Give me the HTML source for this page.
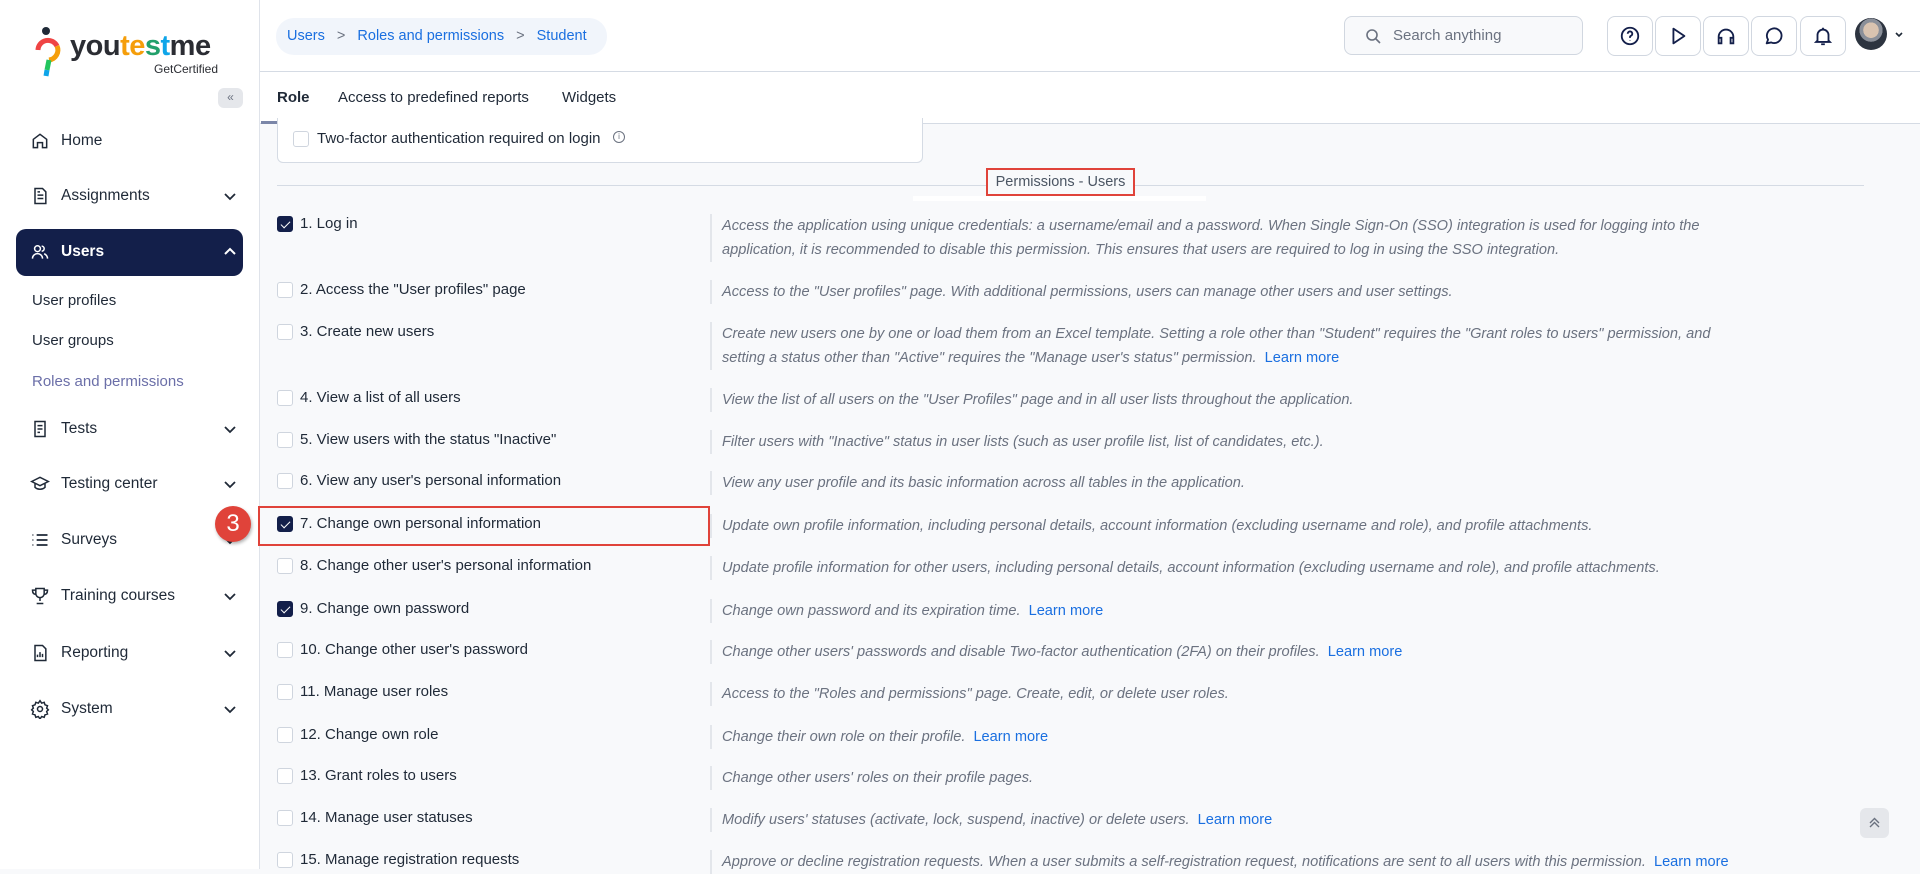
<!DOCTYPE html>
<html><head><meta charset="utf-8"><style>
*{margin:0;padding:0;box-sizing:border-box}
body{width:1920px;height:869px;overflow:hidden;font-family:"Liberation Sans",sans-serif;background:#f8f9fb;position:relative;color:#1f2937}
.abs{position:absolute}
#side{left:0;top:0;width:260px;height:869px;background:#fff;border-right:1px solid #dfe3ea}
.nav{position:absolute;left:30px;font-size:15.5px;color:#1f2937;display:flex;align-items:center;width:200px}
.nav svg{width:20px;height:20px;margin-right:11px;flex:none}
.nav .ch{position:absolute;right:-8px;width:16px;height:16px;margin:0}
.sub{position:absolute;left:32px;font-size:15px;color:#1f2937}
#hdr{left:260px;top:0;width:1660px;height:72px;background:#fff;border-bottom:1px solid #d5dbe4}
#tabs{left:260px;top:72px;width:1660px;height:52px;background:#fff;border-bottom:1px solid #d5dbe4}
.tab{position:absolute;top:17px;font-size:15px;color:#1f2937}
.ib{position:absolute;top:16px;width:46px;height:40px;border:1px solid #d1d7e0;border-radius:8px;background:#fff;display:flex;align-items:center;justify-content:center}
.ib svg{width:22px;height:22px}
.cb{position:absolute;left:277px;width:16px;height:16px;border:1px solid #cfd5de;border-radius:3px;background:#fff}
.cb.on{background:#131f4a;border-color:#131f4a}
.cb.on:after{content:"";position:absolute;left:5px;top:2px;width:4px;height:8px;border:solid #fff;border-width:0 1.5px 1.5px 0;transform:rotate(45deg)}
.lb{position:absolute;left:300px;font-size:15px;color:#1f2937}
.ds{position:absolute;left:710px;border-left:2px solid #e3e6eb;padding-left:10px;font-size:14.6px;font-style:italic;color:#6b7280;line-height:24px;width:1150px}
.ds a{color:#1a6fe0;font-style:normal;text-decoration:none;margin-left:4px}
</style></head><body>
<div id="side" class="abs">
 <svg class="abs" style="left:34px;top:26px" width="28" height="52" viewBox="0 0 28 52"><circle cx="12" cy="5" r="4" fill="#1f2937"/><path d="M4 24a10 10 0 0 1 19-4" stroke="#ef4444" stroke-width="5" fill="none"/><path d="M23 20a10 10 0 0 1-8 14" stroke="#f59e0b" stroke-width="5" fill="none"/><path d="M15 34l-2 10" stroke="#22c55e" stroke-width="5"/><path d="M13 44l-1 6" stroke="#0ea5e9" stroke-width="5"/></svg>
 <div class="abs" style="left:70px;top:30px;font-size:29px;font-weight:bold;color:#2b2d33;letter-spacing:-0.5px">you<span style="color:#f59e0b">te</span><span style="color:#22a06b">s</span><span style="color:#0ea5e9">t</span>me</div>
 <div class="abs" style="left:154px;top:62px;font-size:12px;color:#2b2d33">GetCertified</div>
 <div class="abs" style="left:218px;top:88px;width:25px;height:20px;background:#e5e7eb;border-radius:6px;font-size:12px;color:#6b7280;text-align:center;line-height:19px">«</div>
 <div class="nav" style="top:131px"><svg viewBox="0 0 24 24" fill="none" stroke="#1f2937" stroke-width="1.8"><path d="M4 20V10l8-6 8 6v10h-5v-6H9v6z"/></svg>Home</div>
 <div class="nav" style="top:186px"><svg viewBox="0 0 24 24" fill="none" stroke="#1f2937" stroke-width="1.8"><path d="M6 3h9l4 4v14H6zM9 11h7M9 15h7M9 7h3"/></svg>Assignments<svg class="ch" viewBox="0 0 16 16" fill="none" stroke="#1f2937" stroke-width="1.8"><path d="M3 6l5 5 5-5"/></svg></div>
 <div class="abs" style="left:16px;top:229px;width:227px;height:47px;background:#131f4a;border-radius:10px"></div>
 <div class="nav" style="top:242px;color:#fff;font-weight:bold"><svg viewBox="0 0 24 24" fill="none" stroke="#fff" stroke-width="1.8"><circle cx="9" cy="8" r="3.5"/><path d="M3 20c0-4 3-6 6-6s6 2 6 6M14 5a3 3 0 0 1 0 6M17 14c2 1 4 3 4 6"/></svg>Users<svg class="ch" viewBox="0 0 16 16" fill="none" stroke="#fff" stroke-width="2"><path d="M3 10l5-5 5 5"/></svg></div>
 <div class="sub" style="top:292px">User profiles</div>
 <div class="sub" style="top:332px">User groups</div>
 <div class="sub" style="top:373px;color:#6b6fa8">Roles and permissions</div>
 <div class="nav" style="top:419px"><svg viewBox="0 0 24 24" fill="none" stroke="#1f2937" stroke-width="1.8"><path d="M6 3h12v18H6zM9 8h6M9 12h6M9 16h3"/></svg>Tests<svg class="ch" viewBox="0 0 16 16" fill="none" stroke="#1f2937" stroke-width="1.8"><path d="M3 6l5 5 5-5"/></svg></div>
 <div class="nav" style="top:474px"><svg viewBox="0 0 24 24" fill="none" stroke="#1f2937" stroke-width="1.8"><path d="M2 9l10-5 10 5-10 5zM6 11v5c3 3 9 3 12 0v-5"/></svg>Testing center<svg class="ch" viewBox="0 0 16 16" fill="none" stroke="#1f2937" stroke-width="1.8"><path d="M3 6l5 5 5-5"/></svg></div>
 <div class="nav" style="top:530px"><svg viewBox="0 0 24 24" fill="none" stroke="#1f2937" stroke-width="2.2"><path d="M3 6h1M8 6h13M3 12h1M8 12h13M3 18h1M8 18h13"/></svg>Surveys<svg class="ch" viewBox="0 0 16 16" fill="none" stroke="#1f2937" stroke-width="1.8"><path d="M3 6l5 5 5-5"/></svg></div>
 <div class="nav" style="top:586px"><svg viewBox="0 0 24 24" fill="none" stroke="#1f2937" stroke-width="1.8"><path d="M7 3h10v6a5 5 0 0 1-10 0zM7 5H3c0 4 2 5 4 5M17 5h4c0 4-2 5-4 5M12 14v4M8 21h8"/></svg>Training courses<svg class="ch" viewBox="0 0 16 16" fill="none" stroke="#1f2937" stroke-width="1.8"><path d="M3 6l5 5 5-5"/></svg></div>
 <div class="nav" style="top:643px"><svg viewBox="0 0 24 24" fill="none" stroke="#1f2937" stroke-width="1.8"><path d="M6 3h9l4 4v14H6zM9 17v-3M12 17v-6M15 17v-4"/></svg>Reporting<svg class="ch" viewBox="0 0 16 16" fill="none" stroke="#1f2937" stroke-width="1.8"><path d="M3 6l5 5 5-5"/></svg></div>
 <div class="nav" style="top:699px"><svg viewBox="0 0 24 24" fill="none" stroke="#1f2937" stroke-width="1.8"><circle cx="12" cy="12" r="3"/><path d="M12 2l2 3 3-1 1 3 3 1-1 3 2 2-2 2 1 3-3 1-1 3-3-1-2 3-2-3-3 1-1-3-3-1 1-3-2-2 2-2-1-3 3-1 1-3 3 1z"/></svg>System<svg class="ch" viewBox="0 0 16 16" fill="none" stroke="#1f2937" stroke-width="1.8"><path d="M3 6l5 5 5-5"/></svg></div>
</div>
<div id="hdr" class="abs">
 <div class="abs" style="left:16px;top:18px;width:331px;height:37px;background:#f1f5fb;border-radius:18px;font-size:14.5px;color:#1a6fe0;line-height:37px;padding-left:11px;white-space:nowrap">Users <span style="color:#6b7280;margin:0 8px">&gt;</span> Roles and permissions <span style="color:#6b7280;margin:0 8px">&gt;</span> Student</div>
 <div class="abs" style="left:1084px;top:16px;width:239px;height:39px;border:1px solid #d1d7e0;border-radius:8px;background:#f8f9fb;font-size:15px;color:#6b7280;line-height:37px;padding-left:48px">Search anything
  <svg class="abs" style="left:20px;top:11px" width="16" height="16" viewBox="0 0 16 16" fill="none" stroke="#6b7280" stroke-width="1.6"><circle cx="7" cy="7" r="5"/><path d="M11 11l4 4"/></svg></div>
 <div class="ib" style="left:1347px"><svg viewBox="0 0 24 24" fill="none" stroke="#131f4a" stroke-width="2"><circle cx="12" cy="12" r="9"/><path d="M9.5 9.5a2.5 2.5 0 1 1 3.5 2.3c-.7.3-1 .8-1 1.5v.7M12 17v.5"/></svg></div>
 <div class="ib" style="left:1395px"><svg viewBox="0 0 24 24" fill="none" stroke="#131f4a" stroke-width="2"><path d="M7 4l12 8-12 8z" stroke-linejoin="round"/></svg></div>
 <div class="ib" style="left:1443px"><svg viewBox="0 0 24 24" fill="none" stroke="#131f4a" stroke-width="2"><path d="M4 17v-4a8 8 0 0 1 16 0v4M4 14h3v6H4zM17 14h3v6h-3z"/></svg></div>
 <div class="ib" style="left:1491px"><svg viewBox="0 0 24 24" fill="none" stroke="#131f4a" stroke-width="2"><path d="M4 20l1.5-4A8 8 0 1 1 9 19z" stroke-linejoin="round"/></svg></div>
 <div class="ib" style="left:1540px"><svg viewBox="0 0 24 24" fill="none" stroke="#131f4a" stroke-width="2"><path d="M6 17V11a6 6 0 0 1 12 0v6l1.5 1.5h-15zM10 21h4M12 3v2"/></svg></div>
 <div class="abs" style="left:1595px;top:18px;width:32px;height:32px;border-radius:50%;background:radial-gradient(circle at 50% 38%,#d9c3b0 0 30%,#8a8f99 31% 45%,#2d3440 46%)"></div>
 <svg class="abs" style="left:1634px;top:30px" width="10" height="10" viewBox="0 0 10 10" fill="none" stroke="#1f2937" stroke-width="1.6"><path d="M2 3l3 3 3-3"/></svg>
</div>
<div id="tabs" class="abs">
 <div class="tab" style="left:17px;font-weight:bold">Role</div>
 <div class="tab" style="left:78px">Access to predefined reports</div>
 <div class="tab" style="left:302px">Widgets</div>
 <div class="abs" style="left:1px;top:49px;width:61px;height:3px;background:#7b86a8"></div>
</div>
<div class="abs" style="left:277px;top:118px;width:646px;height:45px;border:1px solid #d5dbe4;border-top:none;border-radius:0 0 6px 6px;background:#fff"></div>
<div class="cb" style="left:293px;top:131px"></div>
<div class="abs" style="left:317px;top:130px;font-size:15px">Two-factor authentication required on login</div>
<div class="abs" style="left:613px;top:131px;width:12px;height:12px;border:1px solid #6b7280;border-radius:50%;font-size:8px;text-align:center;line-height:10px;color:#6b7280">i</div>
<div class="abs" style="left:277px;top:185px;width:1587px;height:1px;background:#d5dbe4"></div>
<div class="abs" style="left:913px;top:196px;width:293px;height:5px;background:#fff"></div>
<div class="abs" style="left:986px;top:168px;width:149px;height:28px;border:2px solid #e0433a;background:#f8f9fb;font-size:14.5px;color:#4b5563;text-align:center;line-height:24px">Permissions - Users</div>

<div class="cb on" style="top:216px"></div><div class="lb" style="top:215px">1. Log in</div>
<div class="ds" style="top:214px">Access the application using unique credentials: a username/email and a password. When Single Sign-On (SSO) integration is used for logging into the<br>application, it is recommended to disable this permission. This ensures that users are required to log in using the SSO integration.</div>
<div class="cb" style="top:282px"></div><div class="lb" style="top:281px">2. Access the "User profiles" page</div>
<div class="ds" style="top:280px">Access to the "User profiles" page. With additional permissions, users can manage other users and user settings.</div>
<div class="cb" style="top:324px"></div><div class="lb" style="top:323px">3. Create new users</div>
<div class="ds" style="top:322px">Create new users one by one or load them from an Excel template. Setting a role other than "Student" requires the "Grant roles to users" permission, and<br>setting a status other than "Active" requires the "Manage user's status" permission. <a>Learn more</a></div>
<div class="cb" style="top:390px"></div><div class="lb" style="top:389px">4. View a list of all users</div>
<div class="ds" style="top:388px">View the list of all users on the "User Profiles" page and in all user lists throughout the application.</div>
<div class="cb" style="top:432px"></div><div class="lb" style="top:431px">5. View users with the status "Inactive"</div>
<div class="ds" style="top:430px">Filter users with "Inactive" status in user lists (such as user profile list, list of candidates, etc.).</div>
<div class="cb" style="top:473px"></div><div class="lb" style="top:472px">6. View any user's personal information</div>
<div class="ds" style="top:471px">View any user profile and its basic information across all tables in the application.</div>
<div class="abs" style="left:258px;top:506px;width:452px;height:40px;border:2px solid #e0433a"></div>
<div class="cb on" style="top:516px"></div><div class="lb" style="top:515px">7. Change own personal information</div>
<div class="ds" style="top:514px">Update own profile information, including personal details, account information (excluding username and role), and profile attachments.</div>
<div class="abs" style="left:215px;top:506px;width:36px;height:36px;border-radius:50%;background:#e0433a;color:#fff;font-size:24px;text-align:center;line-height:36px;box-shadow:1px 2px 3px rgba(0,0,0,.3)">3</div>
<div class="cb" style="top:558px"></div><div class="lb" style="top:557px">8. Change other user's personal information</div>
<div class="ds" style="top:556px">Update profile information for other users, including personal details, account information (excluding username and role), and profile attachments.</div>
<div class="cb on" style="top:601px"></div><div class="lb" style="top:600px">9. Change own password</div>
<div class="ds" style="top:599px">Change own password and its expiration time. <a>Learn more</a></div>
<div class="cb" style="top:642px"></div><div class="lb" style="top:641px">10. Change other user's password</div>
<div class="ds" style="top:640px">Change other users' passwords and disable Two-factor authentication (2FA) on their profiles. <a>Learn more</a></div>
<div class="cb" style="top:684px"></div><div class="lb" style="top:683px">11. Manage user roles</div>
<div class="ds" style="top:682px">Access to the "Roles and permissions" page. Create, edit, or delete user roles.</div>
<div class="cb" style="top:727px"></div><div class="lb" style="top:726px">12. Change own role</div>
<div class="ds" style="top:725px">Change their own role on their profile. <a>Learn more</a></div>
<div class="cb" style="top:768px"></div><div class="lb" style="top:767px">13. Grant roles to users</div>
<div class="ds" style="top:766px">Change other users' roles on their profile pages.</div>
<div class="cb" style="top:810px"></div><div class="lb" style="top:809px">14. Manage user statuses</div>
<div class="ds" style="top:808px">Modify users' statuses (activate, lock, suspend, inactive) or delete users. <a>Learn more</a></div>
<div class="cb" style="top:852px"></div><div class="lb" style="top:851px">15. Manage registration requests</div>
<div class="ds" style="top:850px">Approve or decline registration requests. When a user submits a self-registration request, notifications are sent to all users with this permission. <a>Learn more</a></div>
<div class="abs" style="left:1860px;top:808px;width:29px;height:30px;background:#e5e7eb;border-radius:6px"><svg width="29" height="30" viewBox="0 0 29 30" fill="none" stroke="#6b7280" stroke-width="1.4"><path d="M10 15l4.5-4.5L19 15M10 19l4.5-4.5L19 19"/></svg></div>
</body></html>
